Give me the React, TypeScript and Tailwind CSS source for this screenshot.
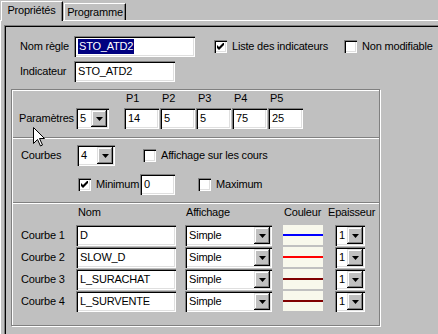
import React from 'react';

const SUNKEN =
  'bg-white shadow-[inset_1px_1px_0_#808080,inset_2px_2px_0_#000,inset_-1px_-1px_0_#fff,inset_-2px_-2px_0_#dfdfdf]';
const RAISED =
  'bg-[#c0c0c0] shadow-[inset_-1px_-1px_0_#000,inset_1px_1px_0_#dfdfdf,inset_-2px_-2px_0_#808080,inset_2px_2px_0_#fff]';

function Edit({ className, children }: { className: string; children?: React.ReactNode }) {
  return <div className={`h-[21px] ${SUNKEN} flex items-center pl-[4px] ${className}`}>{children}</div>;
}

function Arrow() {
  return (
    <svg width="7" height="4" viewBox="0 0 7 4">
      <path d="M0 0 H7 L3.5 4 Z" fill="#000" />
    </svg>
  );
}

function Combo({ className, value }: { className: string; value: string }) {
  return (
    <div className={`h-[21px] ${SUNKEN} flex items-stretch p-[2px] ${className}`}>
      <span className="flex-1 flex items-center pl-[2px]">{value}</span>
      <span className={`w-[16px] ${RAISED} flex items-center justify-center`}>
        <Arrow />
      </span>
    </div>
  );
}

function Check({ checked }: { checked?: boolean }) {
  return (
    <span className={`w-[13px] h-[13px] shrink-0 ${SUNKEN} flex items-center justify-center`}>
      {checked && (
        <svg width="7" height="7" viewBox="0 0 7 7">
          <path d="M0 2 L2 4 L7 -1 L7 2 L2 7 L0 5 Z" fill="#000" />
        </svg>
      )}
    </span>
  );
}

function Separator() {
  return <div className="h-[2px] border-t border-[#808080] border-b border-b-white" />;
}

const CURVES = [
  { label: 'Courbe 1', name: 'D', color: 'bg-[#0000ff]' },
  { label: 'Courbe 2', name: 'SLOW_D', color: 'bg-[#ff0000]' },
  { label: 'Courbe 3', name: 'L_SURACHAT', color: 'bg-[#800000]' },
  { label: 'Courbe 4', name: 'L_SURVENTE', color: 'bg-[#800000]' },
];

const PARAMS = [
  { p: 'P1', v: '14' },
  { p: 'P2', v: '5' },
  { p: 'P3', v: '5' },
  { p: 'P4', v: '75' },
  { p: 'P5', v: '25' },
];

export default function App() {
  return (
    <div className="relative w-[438px] h-[334px] overflow-hidden bg-[#c0c0c0] text-black font-['Liberation_Sans',Arial,sans-serif] text-[11px] leading-[13px] tracking-[-0.2px]">
      {/* tabs */}
      <div className="flex items-end h-[20px] pl-[1px]">
        <div className="relative z-10 h-[20px] w-[62px] -mb-px bg-[#c0c0c0] border-l border-t border-white border-r border-r-black shadow-[inset_-1px_0_0_#808080] flex items-center justify-center pb-[2px] pr-[1px]">
          Propriétés
        </div>
        <div className="h-[17px] w-[62px] ml-px border-l border-t border-white border-r border-r-black shadow-[inset_-1px_0_0_#808080] flex items-center justify-center">
          Programme
        </div>
      </div>

      {/* page */}
      <div className="border-t border-l border-white h-[320px] pl-[3px] pt-[4px]">
        <div className="h-full border-t border-l border-[#808080] shadow-[inset_1px_1px_0_#000] pt-[10px] pl-[15px]">
          <div className="flex items-center h-[21px]">
            <span className="w-[54px]">Nom règle</span>
            <Edit className="w-[121px] pl-[3px]">
              <span className="bg-[#000080] text-white px-px leading-[15px]">STO_ATD2</span>
            </Edit>
            <span className="ml-[19px]">
              <Check checked />
            </span>
            <span className="ml-[5px]">Liste des indicateurs</span>
            <span className="ml-[16px]">
              <Check />
            </span>
            <span className="ml-[5px]">Non modifiable</span>
          </div>
          <div className="flex items-center h-[21px] mt-[4px]">
            <span className="w-[54px]">Indicateur</span>
            <Edit className="w-[101px]">STO_ATD2</Edit>
          </div>

          {/* group */}
          <div className="mt-[7px] -ml-[9px] w-[369px] h-[237px] border border-[#808080] shadow-[inset_1px_1px_0_#fff,1px_1px_0_#fff] pt-px pl-px">
            {/* parametres */}
            <div className="h-[46px] flex items-end pb-[8px] pl-[6px]">
              <div className="flex items-center h-[21px]">
                <span className="w-[57px]">Paramètres</span>
                <Combo className="w-[33px]" value="5" />
              </div>
              <div className="flex gap-[1px] ml-[15px]">
                {PARAMS.map((p) => (
                  <div key={p.p} className="flex flex-col w-[35px]">
                    <span className="pl-[2px] h-[13px] mb-[3px]">{p.p}</span>
                    <Edit className="w-[35px] pl-[3px]">{p.v}</Edit>
                  </div>
                ))}
              </div>
            </div>
            <Separator />

            {/* courbes */}
            <div className="h-[63px] pt-[6px] pl-[8px]">
              <div className="flex items-center h-[21px]">
                <span className="w-[56px]">Courbes</span>
                <Combo className="w-[38px]" value="4" />
                <span className="ml-[28px]">
                  <Check />
                </span>
                <span className="ml-[5px]">Affichage sur les cours</span>
              </div>
              <div className="flex items-center h-[21px] mt-[8px] pl-[57px]">
                <Check checked />
                <span className="ml-[5px] w-[44px]">Minimum</span>
                <Edit className="w-[35px] pl-[3px]">0</Edit>
                <span className="ml-[23px]">
                  <Check />
                </span>
                <span className="ml-[5px]">Maximum</span>
              </div>
            </div>
            <Separator />

            {/* liste */}
            <div className="pt-[2px] pl-[8px]">
              <div className="flex h-[13px]">
                <span className="ml-[57px] w-[108px]">Nom</span>
                <span className="w-[98px]">Affichage</span>
                <span className="w-[44px]">Couleur</span>
                <span>Epaisseur</span>
              </div>
              <div className="flex flex-col gap-[1px] mt-[6px]">
                {CURVES.map((c) => (
                  <div key={c.label} className="flex items-start h-[21px]">
                    <span className="w-[55px] self-center">{c.label}</span>
                    <Edit className="w-[100px] pl-[3px]">{c.name}</Edit>
                    <Combo className="w-[87px] ml-[9px]" value="Simple" />
                    <div className="w-[40px] h-[20px] ml-[11px] bg-[#f8f8ec] pt-[9px]">
                      <div className={`w-full h-[2px] ${c.color}`} />
                    </div>
                    <Combo className="w-[30px] ml-[12px]" value="1" />
                  </div>
                ))}
              </div>
            </div>
          </div>
        </div>
      </div>

      {/* mouse pointer */}
      <svg className="absolute left-[33px] top-[127px]" width="13" height="20" viewBox="0 0 13 20">
        <path
          d="M0.5 0.5 L0.5 16.5 L4.5 12.5 L7.5 19 L9.5 18 L6.5 11.5 L11.5 11.5 Z"
          fill="#fff"
          stroke="#000"
          strokeWidth="1"
        />
      </svg>
    </div>
  );
}
